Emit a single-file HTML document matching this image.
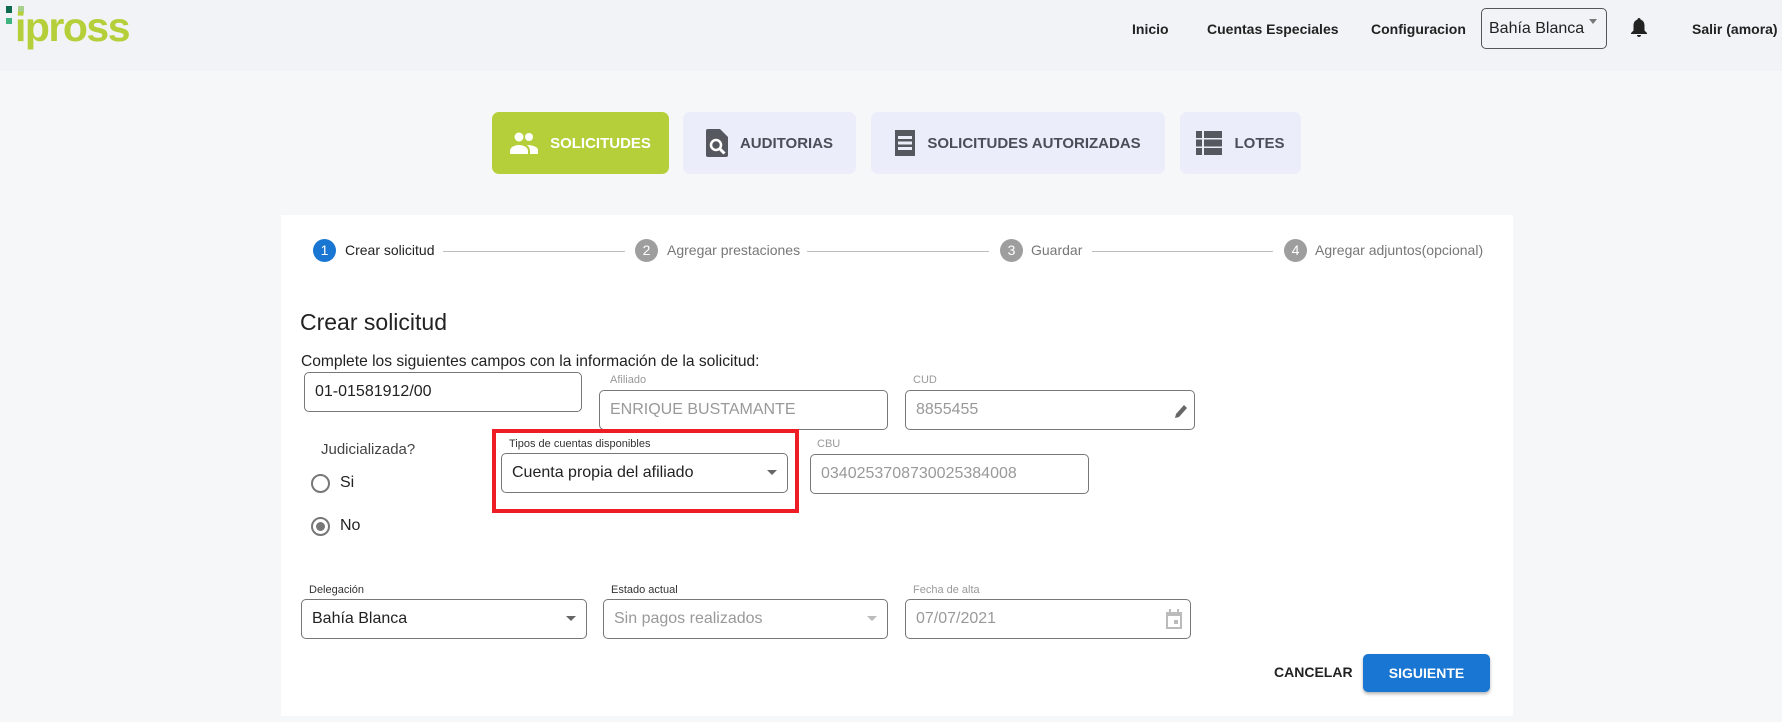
<!DOCTYPE html>
<html><head><meta charset="utf-8"><style>
*{box-sizing:border-box;margin:0;padding:0}
body{width:1782px;height:722px;background:#f6f7f9;font-family:"Liberation Sans",sans-serif;position:relative;overflow:hidden;color:#222}
.a{position:absolute}
.hdr{left:0;top:0;width:1782px;height:71px;background:#f2f3f6}
.nav{font-weight:bold;font-size:14px;color:#222;top:21px}
.tab{top:112px;height:62px;border-radius:7px;background:#ebedfb;display:flex;align-items:center;justify-content:center;gap:12px;font-weight:bold;font-size:15px;color:#4a4f57}
.card{left:281px;top:215px;width:1232px;height:501px;background:#fff}
.circ{width:23px;height:23px;border-radius:50%;background:#9e9e9e;color:#fff;font-size:14px;text-align:center;line-height:23px;top:239px}
.st{top:242px;font-size:14px;color:#777}
.ln{height:1px;background:#bdbdbd;top:251px}
.inp{border:1px solid #777;border-radius:5px;height:40px;font-size:16px;padding:0 10px;display:flex;align-items:center;color:#999}
.lbl{font-size:11px;color:#999}
.arr{position:absolute;right:10px;top:16px;width:0;height:0;border-left:5px solid transparent;border-right:5px solid transparent;border-top:5px solid #666}
</style></head><body>
<div class="a hdr"></div>
<div class="a" style="left:6px;top:6px;width:6px;height:7px;background:#0e6b4e"></div>
<div class="a" style="left:18px;top:6px;width:6px;height:7px;background:#a8d08d"></div>
<div class="a" style="left:6px;top:18px;width:6px;height:6px;background:#3fb37f"></div>
<div class="a" style="left:15px;top:4px;font-size:41px;font-weight:bold;color:#b5cf3a;letter-spacing:-1.5px">ipross</div>
<div class="a nav" style="left:1132px">Inicio</div>
<div class="a nav" style="left:1207px">Cuentas Especiales</div>
<div class="a nav" style="left:1371px">Configuracion</div>
<div class="a" style="left:1481px;top:8px;width:126px;height:41px;border:1px solid #555;border-radius:5px;font-size:16px;padding:11px 0 0 7px">Bahía Blanca<span style="position:absolute;right:9px;top:10px;border-left:4px solid transparent;border-right:4px solid transparent;border-top:5px solid #777"></span></div>
<svg class="a" style="left:1631px;top:18px" width="16" height="20" viewBox="0 0 16 20"><path d="M8 0c1 0 1.5.7 1.5 1.5C12 2.3 13.5 4.5 13.5 7.5v5L16 15v1H0v-1l2.5-2.5v-5C2.5 4.5 4 2.3 6.5 1.5 6.5.7 7 0 8 0zM6 17h4c0 1.2-.9 2-2 2s-2-.8-2-2z" fill="#222"/></svg>
<div class="a nav" style="left:1692px">Salir (amora)</div>

<div class="a tab" style="left:492px;width:177px;background:#b5cf3a;color:#fff">
<svg width="28" height="22" viewBox="0 0 28 22"><circle cx="9" cy="5" r="4.5" fill="#fff"/><circle cx="19" cy="5" r="4" fill="#fff"/><path d="M0 22v-3c0-4 5-6 9-6s9 2 9 6v3z" fill="#fff"/><path d="M17 13c4 0 11 1.5 11 5v4h-8v-3c0-2.5-1-4-3-6z" fill="#fff"/></svg>SOLICITUDES</div>
<div class="a tab" style="left:683px;width:173px">
<svg width="22" height="28" viewBox="0 0 22 28"><path d="M2 0h12l8 8v18a2 2 0 0 1-2 2H2a2 2 0 0 1-2-2V2a2 2 0 0 1 2-2z" fill="#55595f"/><circle cx="10" cy="16" r="5" fill="none" stroke="#fff" stroke-width="2.5"/><path d="M13.5 19.5l5 5" stroke="#fff" stroke-width="3"/></svg>AUDITORIAS</div>
<div class="a tab" style="left:871px;width:294px">
<svg width="20" height="28" viewBox="0 0 20 28"><rect y="1" width="20" height="26" fill="#55595f"/><rect x="3" y="7" width="14" height="3" fill="#ebedfb"/><rect x="3" y="12.5" width="14" height="3" fill="#ebedfb"/><rect x="3" y="18" width="14" height="3" fill="#ebedfb"/></svg>SOLICITUDES AUTORIZADAS</div>
<div class="a tab" style="left:1180px;width:121px">
<svg width="26" height="24" viewBox="0 0 26 24"><rect width="6" height="7" fill="#55595f"/><rect x="8" width="18" height="7" fill="#55595f"/><rect y="8.5" width="6" height="7" fill="#55595f"/><rect x="8" y="8.5" width="18" height="7" fill="#55595f"/><rect y="17" width="6" height="7" fill="#55595f"/><rect x="8" y="17" width="18" height="7" fill="#55595f"/></svg>LOTES</div>

<div class="a card"></div>
<div class="a circ" style="left:313px;background:#1976d2">1</div>
<div class="a st" style="left:345px;color:#222">Crear solicitud</div>
<div class="a ln" style="left:443px;width:182px"></div>
<div class="a circ" style="left:635px">2</div>
<div class="a st" style="left:667px">Agregar prestaciones</div>
<div class="a ln" style="left:807px;width:182px"></div>
<div class="a circ" style="left:1000px">3</div>
<div class="a st" style="left:1031px">Guardar</div>
<div class="a ln" style="left:1092px;width:181px"></div>
<div class="a circ" style="left:1284px">4</div>
<div class="a st" style="left:1315px">Agregar adjuntos(opcional)</div>

<div class="a" style="left:300px;top:309px;font-size:23px;color:#222">Crear solicitud</div>
<div class="a" style="left:301px;top:353px;font-size:15.6px;color:#222">Complete los siguientes campos con la información de la solicitud:</div>

<div class="a inp" style="left:304px;top:372px;width:278px;color:#222">01-01581912/00</div>
<div class="a lbl" style="left:610px;top:374px">Afiliado</div>
<div class="a inp" style="left:599px;top:390px;width:289px">ENRIQUE BUSTAMANTE</div>
<div class="a lbl" style="left:913px;top:374px">CUD</div>
<div class="a inp" style="left:905px;top:390px;width:290px">8855455
<svg style="position:absolute;right:6px;top:12px" width="14" height="16" viewBox="0 0 14 16"><path d="M1 15l1-4 8-9 3 3-8 9z" fill="#666"/></svg></div>

<div class="a" style="left:321px;top:441px;font-size:15px;color:#444">Judicializada?</div>
<div class="a" style="left:311px;top:474px;width:19px;height:19px;border:2px solid #777;border-radius:50%"></div>
<div class="a" style="left:340px;top:474px;font-size:16px">Si</div>
<div class="a" style="left:311px;top:517px;width:19px;height:19px;border:2px solid #777;border-radius:50%"><div style="margin:3px;width:9px;height:9px;border-radius:50%;background:#777"></div></div>
<div class="a" style="left:340px;top:517px;font-size:16px">No</div>

<div class="a" style="left:492px;top:429px;width:307px;height:84px;border:4px solid #ee1c25"></div>
<div class="a lbl" style="left:509px;top:438px;color:#333">Tipos de cuentas disponibles</div>
<div class="a inp" style="left:501px;top:453px;width:287px;color:#222">Cuenta propia del afiliado<span class="arr"></span></div>
<div class="a lbl" style="left:817px;top:438px">CBU</div>
<div class="a inp" style="left:810px;top:454px;width:279px">0340253708730025384008</div>

<div class="a lbl" style="left:309px;top:584px;color:#333">Delegación</div>
<div class="a inp" style="left:301px;top:599px;width:286px;color:#222">Bahía Blanca<span class="arr"></span></div>
<div class="a lbl" style="left:611px;top:584px;color:#333">Estado actual</div>
<div class="a inp" style="left:603px;top:599px;width:285px">Sin pagos realizados<span class="arr" style="border-top-color:#bbb"></span></div>
<div class="a lbl" style="left:913px;top:584px">Fecha de alta</div>
<div class="a inp" style="left:905px;top:599px;width:286px">07/07/2021
<svg style="position:absolute;right:8px;top:9px" width="16" height="20" viewBox="0 0 16 20"><path d="M3 0h2v3h6V0h2v3h3v17H0V3h3z" fill="#bbb"/><rect x="2" y="7" width="12" height="11" fill="#fff"/><rect x="8" y="11" width="4" height="4" fill="#bbb"/></svg></div>

<div class="a" style="left:1274px;top:664px;font-size:14px;font-weight:bold">CANCELAR</div>
<div class="a" style="left:1363px;top:654px;width:127px;height:38px;background:#1976d2;border-radius:5px;color:#fff;font-weight:bold;font-size:14px;text-align:center;line-height:38px;box-shadow:0 2px 3px rgba(0,0,0,.3)">SIGUIENTE</div>
</body></html>
